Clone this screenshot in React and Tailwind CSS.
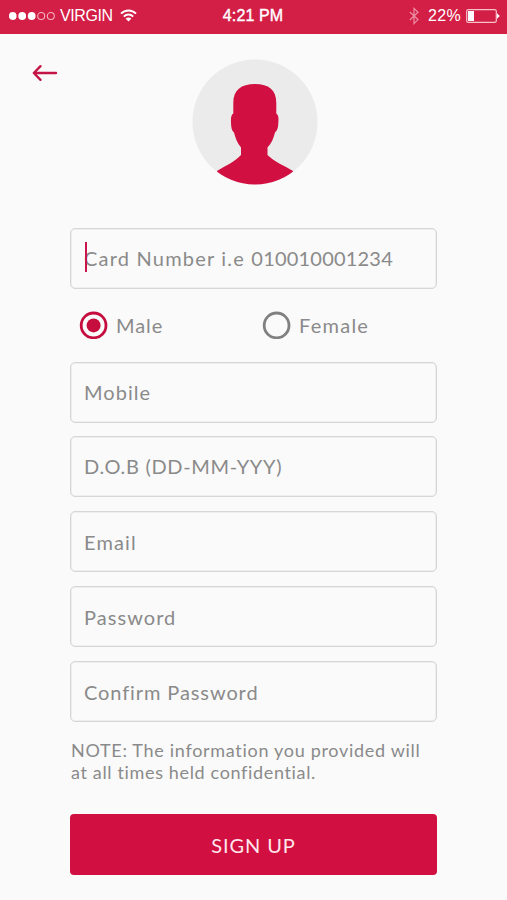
const fields = [
  { label: "Mobile", tracking: "tracking-[1.05px]", spacing: "pb-[2px]" },
  { label: "D.O.B (DD-MM-YYY)", tracking: "tracking-[0.68px]", spacing: "mt-[13px] pb-[2px]" },
  { label: "Email", tracking: "tracking-[1.15px]", spacing: "mt-[14px]" },
  { label: "Password", tracking: "tracking-[1.05px]", spacing: "mt-[14px]" },
  { label: "Confirm Password", tracking: "tracking-[0.9px]", spacing: "mt-[14px]" },
];

const StatusBar = () => {
  return (
    <div className="grid h-[34px] grid-cols-[1fr_auto_1fr] items-center bg-[#d31e46] pb-[3px] pl-[9px] pr-[7px] font-['Liberation_Sans',sans-serif] text-[16px] leading-none text-white">
      <div className="flex items-center">
        <svg width="47" height="10" viewBox="0 0 47 10" fill="#fff">
          <circle cx="3.7" cy="5" r="3.9" />
          <circle cx="13.2" cy="5" r="3.9" />
          <circle cx="22.7" cy="5" r="3.9" />
          <g fill="none" stroke="#f3b3c0" strokeWidth="1.1">
            <circle cx="32.2" cy="5" r="3.5" />
            <circle cx="41.8" cy="5" r="3.5" />
          </g>
        </svg>
        <span className="ml-1 tracking-[-0.4px]">VIRGIN</span>
        <svg className="ml-[7px]" width="17" height="13" viewBox="0 0 17 13">
          <g fill="none" stroke="#fff" strokeWidth="1.9">
            <path d="M1 4.7C5 .4 12 .4 16 4.7" />
            <path d="M3.8 7.6C6.4 4.8 10.6 4.8 13.2 7.6" />
          </g>
          <path fill="#fff" d="M5.6 9.5C7.2 8 9.8 8 11.4 9.5L8.5 12.5z" />
        </svg>
      </div>

      <span className="mr-[3px] tracking-[0.1px] [-webkit-text-stroke:0.4px_#fff]">4:21 PM</span>

      <div className="flex items-center justify-end">
        <svg width="10" height="18" viewBox="0 0 10 18" fill="none" stroke="#ec8fa4" strokeWidth="1.2">
          <path d="M.8 5L9 12.6 5 16.6V1.4L9 5.2.8 13" />
        </svg>
        <span className="ml-[9px] tracking-[0.3px]">22%</span>
        <svg className="ml-[5px]" width="34" height="14" viewBox="0 0 34 14">
          <rect x=".7" y=".7" width="29.6" height="12.6" rx="1.6" fill="none" stroke="#f6c3cd" strokeWidth="1.2" />
          <rect x="2" y="2" width="6" height="10" fill="#fff" />
          <path d="M31 4.3L33.8 7 31 9.7z" fill="#fff" />
        </svg>
      </div>
    </div>
  );
};

const Avatar = () => {
  return (
    <svg width="126" height="126" viewBox="0 0 126 126">
      <clipPath id="avatar">
        <circle cx="63" cy="63" r="62.5" />
      </clipPath>
      <circle cx="63" cy="63" r="62.5" fill="#ebebeb" />
      <path
        clipPath="url(#avatar)"
        fill="#d20f41"
        d="M41.3 44C41.3 31 49 25 63 25S84.3 31 84.3 44V54.5C86.6 56 86.7 59 86.3 64 86.2 68 85.6 71.5 83 73.5 81.5 79.5 79.5 84.5 75.5 88.5V96C82 102.5 92 106.5 101 112V126H25V112C34 106.5 43 102.5 49 96V88.5C45.5 84.5 43.5 79.5 42 73.5 39.5 71.5 39.2 68 39 64 38.8 59 39 56 41.3 54.5Z"
      />
    </svg>
  );
};

const Radio = ({ label, checked, tracking }) => {
  return (
    <div className="flex w-[183px] shrink-0 items-center">
      <svg width="29" height="28" viewBox="0 0 29 28">
        <circle cx="14.6" cy="14.4" r="12.4" fill="none" stroke={checked ? "#c50e3d" : "#808080"} strokeWidth="2.8" />
        {checked && <circle cx="14.6" cy="14.4" r="7" fill="#c50e3d" />}
      </svg>
      <span className={`ml-[8px] ${tracking}`}>{label}</span>
    </div>
  );
};

const App = () => {
  return (
    <div className="h-[900px] w-[507px] overflow-hidden bg-[#fafafa] font-['Lato',sans-serif] text-[20px] leading-6 text-[#8a8a8a]">
      <StatusBar />

      {/* Back button + avatar */}
      <div className="grid h-[194px] grid-cols-[192px_126px_1fr] pt-[25px]">
        <svg className="ml-[32px] mt-[5px]" width="26" height="18" viewBox="0 0 26 18" fill="none" stroke="#c31646" strokeWidth="2.4" strokeLinecap="round" strokeLinejoin="round">
          <path d="M24 9H2M8.5 2.2L1.8 9l6.7 6.8" />
        </svg>
        <Avatar />
      </div>

      <div className="ml-[70px] w-[367px]">
        <div className="relative flex h-[61px] items-center rounded-[5px] border border-[#d6d6d6] pb-[2px] pl-[13px] shadow-[inset_0_0_0_1px_#eeeeee]">
          <span className="whitespace-pre tracking-[1.2px]">Card Number i.e </span>
          <span className="tracking-[0.2px]">010010001234</span>
          <div className="absolute left-[14px] top-[13px] h-[30px] w-[2px] bg-[#c9164a]" />
        </div>

        <div className="flex h-[73px] items-center pb-px pl-[9px]">
          <Radio label="Male" checked tracking="tracking-[0.9px]" />
          <Radio label="Female" tracking="tracking-[1.25px]" />
        </div>

        {fields.map((field) => (
          <div
            key={field.label}
            className={`flex h-[61px] items-center rounded-[5px] border border-[#d6d6d6] pl-[13px] shadow-[inset_0_0_0_1px_#eeeeee] ${field.tracking} ${field.spacing}`}
          >
            {field.label}
          </div>
        ))}

        <p className="mt-[17px] whitespace-nowrap pl-px text-[18px] leading-[22px]">
          <span className="block tracking-[0.7px]">NOTE: The information you provided will</span>
          <span className="block tracking-[0.65px]">at all times held confidential.</span>
        </p>

        <button className="mt-[31px] block h-[61px] w-full rounded-[4px] bg-[#d20f41] text-[20px] tracking-[0.9px] text-[#ffe6ec]">
          SIGN UP
        </button>
      </div>
    </div>
  );
};

export default App;
